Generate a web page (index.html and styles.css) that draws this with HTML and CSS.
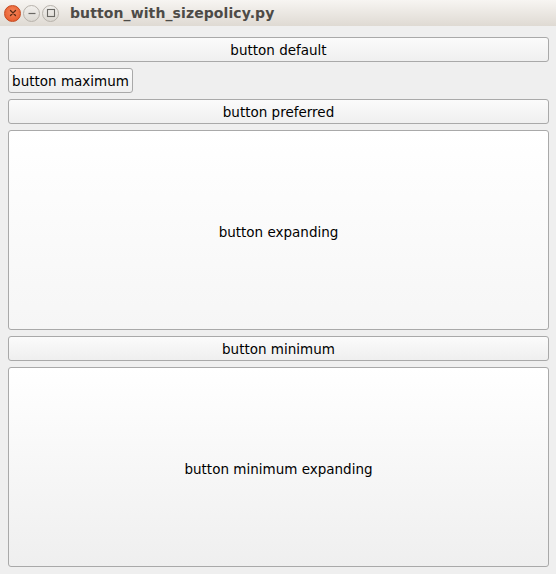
FILE: index.html
```html
<!DOCTYPE html>
<html>
<head>
<meta charset="utf-8">
<link rel="stylesheet" href="styles.css">
</head>
<body>
<div class="window">
  <div class="titlebar">
    <div class="controls">
      <span class="ctl close"><svg width="16" height="16" viewBox="0 0 16 16"><path d="M5.5 5.5 L10.5 10.5 M10.5 5.5 L5.5 10.5" stroke="#5a2a14" stroke-width="1.3" stroke-linecap="round"/></svg></span>
      <span class="ctl"><svg width="16" height="16" viewBox="0 0 16 16"><path d="M4.5 8.5 H11.5" stroke="#6a6864" stroke-width="1.2"/></svg></span>
      <span class="ctl"><svg width="16" height="16" viewBox="0 0 16 16"><rect x="4.5" y="4.5" width="7" height="7" fill="none" stroke="#6a6864" stroke-width="1.1"/></svg></span>
    </div>
    <div class="title">button_with_sizepolicy.py</div>
  </div>
  <div class="content">
    <button class="btn">button default</button>
    <button class="btn btn-max">button maximum</button>
    <button class="btn">button preferred</button>
    <button class="btn btn-expand">button expanding</button>
    <button class="btn">button minimum</button>
    <button class="btn btn-expand2">button minimum expanding</button>
  </div>
</div>
</body>
</html>
```
FILE: styles.css
```css
html, body {
  margin: 0;
  padding: 0;
  background: #efefef;
}
.window {
  width: 556px;
  height: 574px;
  display: flex;
  flex-direction: column;
  background: #efefef;
  font-family: "DejaVu Sans", "Open Sans", sans-serif;
}
.titlebar {
  height: 26px;
  display: flex;
  align-items: center;
  background: linear-gradient(#f7f5f2, #dfdad3);
}
.controls {
  display: flex;
  gap: 2px;
  padding-left: 4px;
  width: 66px;
}
.ctl {
  width: 17px;
  height: 17px;
  border-radius: 50%;
  box-sizing: border-box;
  background: linear-gradient(#f2f0ed, #dcd8d2);
  border: 1px solid #b7b2ab;
  display: flex;
  align-items: center;
  justify-content: center;
}
.ctl svg { flex: none; }
.ctl.close {
  background: radial-gradient(circle at 50% 40%, #f6875c, #e45323);
  border-color: #c5481e;
}
.title {
  font-weight: bold;
  font-size: 14px;
  color: #4d4b47;
  letter-spacing: 0.1px;
}
.content {
  display: flex;
  flex-direction: column;
  align-items: stretch;
  gap: 6px;
  padding: 11px 7px 7px 8px;
}
.btn {
  font-family: "DejaVu Sans", "Open Sans", sans-serif;
  font-size: 13.5px;
  color: #000;
  height: 25px;
  margin: 0;
  padding: 0;
  border: 1px solid #a9a9a9;
  border-radius: 3px;
  background: linear-gradient(#fbfbfb, #efefef);
  box-sizing: border-box;
}
.btn-max {
  align-self: flex-start;
  width: 125px;
}
.btn-expand {
  height: 200px;
  padding-top: 3px;
  background: linear-gradient(#ffffff, #f6f6f6);
}
.btn-expand2 {
  height: 200px;
  padding-top: 3px;
  background: linear-gradient(#ffffff, #efefef);
}
```
